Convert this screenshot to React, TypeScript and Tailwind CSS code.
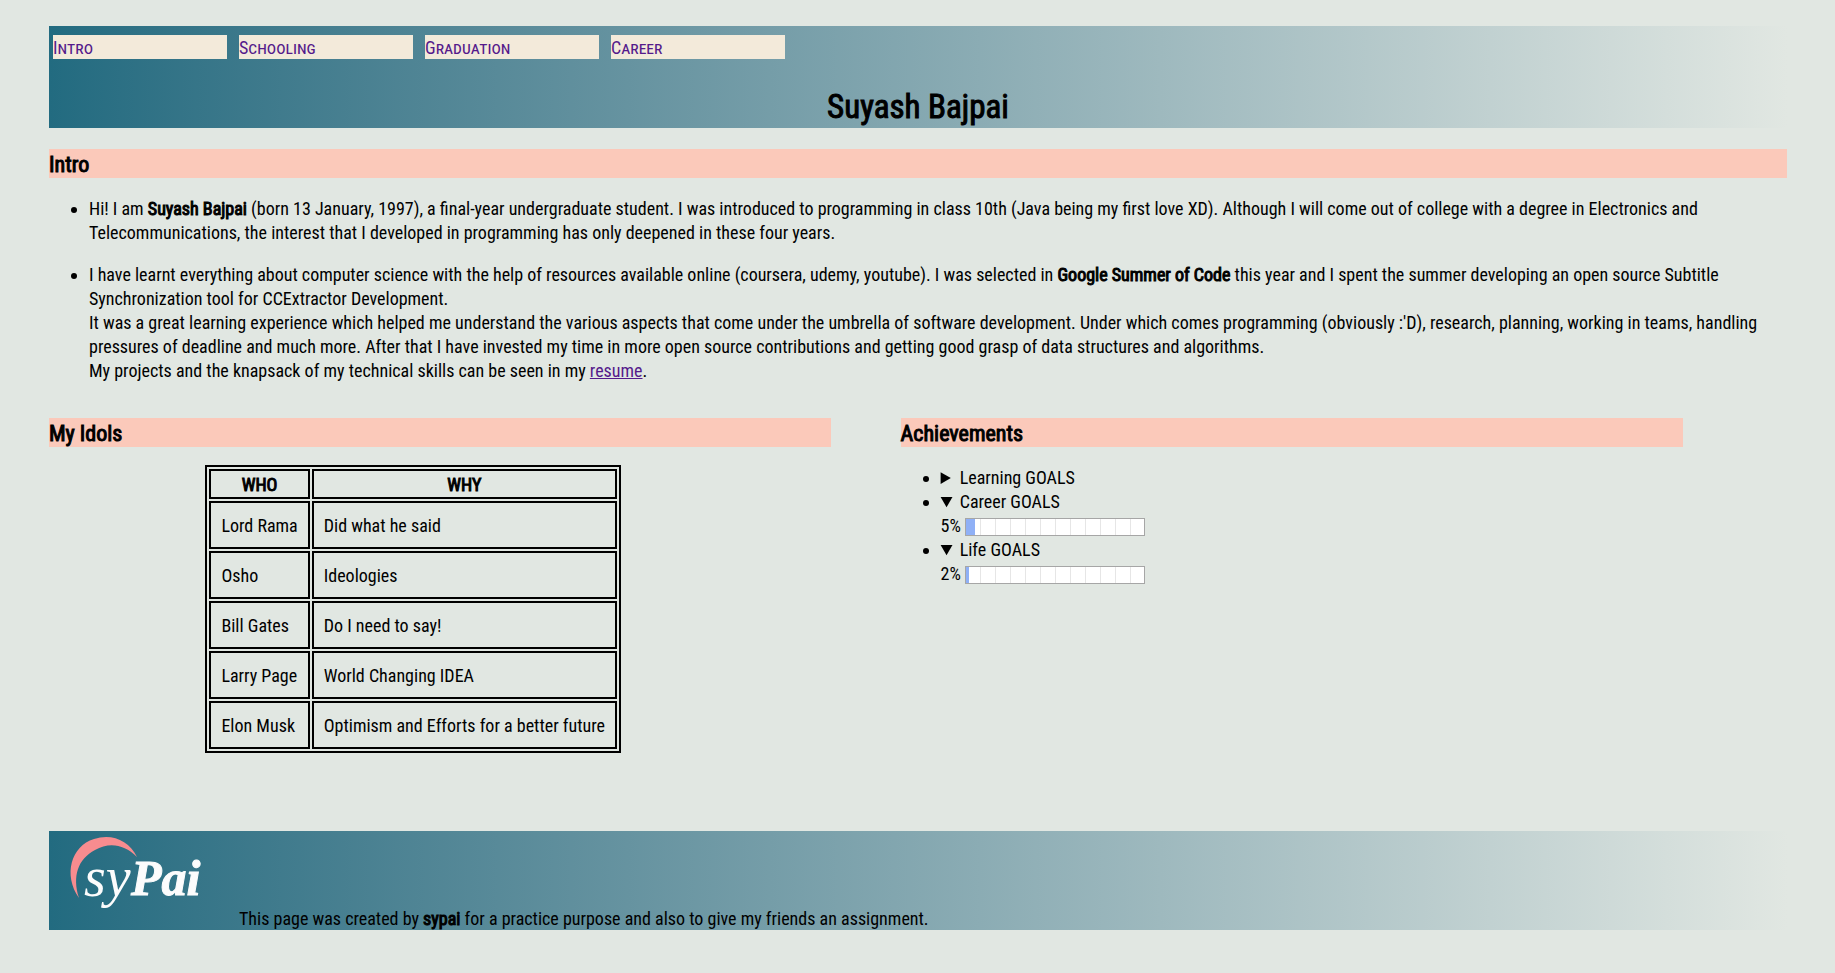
import type { ReactNode } from "react";

const NAV_LINKS = [
  { label: "Intro", href: "#intro" },
  { label: "Schooling", href: "#schooling" },
  { label: "Graduation", href: "#graduation" },
  { label: "Career", href: "#career" },
];

const IDOLS = [
  { who: "Lord Rama", why: "Did what he said" },
  { who: "Osho", why: "Ideologies" },
  { who: "Bill Gates", why: "Do I need to say!" },
  { who: "Larry Page", why: "World Changing IDEA" },
  { who: "Elon Musk", why: "Optimism and Efforts for a better future" },
];

function SectionHeading({ children }: { children: ReactNode }) {
  return (
    <h2 className="bg-[#fbc9ba] pt-[2px] text-[22px] leading-[27px] font-normal [-webkit-text-stroke:1px_black]">
      {children}
    </h2>
  );
}

function Strong({ children }: { children: ReactNode }) {
  return <b className="font-normal [-webkit-text-stroke:1px_black]">{children}</b>;
}

function Goal({ title, percent }: { title: string; percent?: number }) {
  return (
    <li>
      <details open={percent !== undefined}>
        <summary>{title}</summary>
        {percent !== undefined && (
          <label className="flex h-6 items-center gap-1">
            {percent}%
            <progress
              max={100}
              value={percent}
              className="mt-[2px] h-[18px] w-[180px] appearance-none border border-[#a6a6a6] bg-white [&::-webkit-progress-bar]:bg-[repeating-linear-gradient(to_right,white_0_14px,#e6e6e6_14px_15px)] [&::-webkit-progress-value]:bg-[#8fb0f6]"
            />
          </label>
        )}
      </details>
    </li>
  );
}

function Logo() {
  return (
    <svg viewBox="0 0 186 99" className="h-[99px] w-[186px] shrink-0" role="img" aria-label="syPai">
      <path
        d="M30 67 C14 44 22 15 45 8 C62 2 80 9 88 26 C75 13 60 11 46 19 C29 28 23 45 30 67 Z"
        fill="#f78c8f"
      />
      <g fill="#fcfcfc" fontFamily="'Liberation Serif', serif" fontStyle="italic">
        <text x="35" y="65" fontSize="56">sy</text>
        <text x="82" y="64" fontSize="50" fontWeight="700" stroke="#fcfcfc" strokeWidth="1">
          Pai
        </text>
      </g>
    </svg>
  );
}

export default function App() {
  return (
    <div className="min-h-screen bg-[#e1e7e2] pt-[26px] pr-12 pb-[43px] pl-[49px] font-['Roboto_Condensed','Liberation_Sans_Narrow',Roboto,sans-serif] text-[18px] leading-6 text-black">
      <header className="bg-linear-to-r from-[#226b80] to-[#e1e7e2] pt-[9px]">
        <nav className="flex gap-3 pl-1">
          {NAV_LINKS.map((link) => (
            <a
              key={link.label}
              href={link.href}
              className="w-[174px] bg-[#f3eada] pt-[2px] leading-[22px] text-[#551a8b] [font-variant:small-caps]"
            >
              {link.label}
            </a>
          ))}
        </nav>
        <h1 className="mt-[27px] text-center text-[33px] leading-[42px] font-normal [-webkit-text-stroke:1px_black]">
          Suyash Bajpai
        </h1>
      </header>

      <main>
        <section id="intro" className="mt-[21px]">
          <SectionHeading>Intro</SectionHeading>
          <ul className="mt-[19px] flex list-disc flex-col gap-[18px] pl-10">
            <li>
              Hi! I am <Strong>Suyash Bajpai</Strong> (born 13 January, 1997), a final-year
              undergraduate student. I was introduced to programming in class 10th (Java being my
              first love XD). Although I will come out of college with a degree in Electronics and
              Telecommunications, the interest that I developed in programming has only deepened in
              these four years.
            </li>
            <li>
              I have learnt everything about computer science with the help of resources available
              online (coursera, udemy, youtube). I was selected in{" "}
              <Strong>Google Summer of Code</Strong> this year and I spent the summer developing an
              open source Subtitle Synchronization tool for CCExtractor Development.
              <br />
              It was a great learning experience which helped me understand the various aspects that
              come under the umbrella of software development. Under which comes programming
              (obviously :'D), research, planning, working in teams, handling pressures of deadline
              and much more. After that I have invested my time in more open source contributions
              and getting good grasp of data structures and algorithms.
              <br />
              My projects and the knapsack of my technical skills can be seen in my{" "}
              <a href="#resume" className="text-[#551a8b] underline">
                resume
              </a>
              .
            </li>
          </ul>
        </section>

        <div className="mt-[35px] flex gap-[4%]">
          <section className="w-[45%]">
            <SectionHeading>My Idols</SectionHeading>
            <table className="mt-[18px] ml-[20%] border-separate border-spacing-[2px] border-2 border-black">
              <thead>
                <tr className="[-webkit-text-stroke:1px_black]">
                  <th className="border-2 border-black px-px pt-[2px] text-center font-normal">
                    WHO
                  </th>
                  <th className="border-2 border-black px-px pt-[2px] text-center font-normal">
                    WHY
                  </th>
                </tr>
              </thead>
              <tbody>
                {IDOLS.map((idol) => (
                  <tr key={idol.who}>
                    <td className="border-2 border-black px-[10px] pt-[11px] pb-[9px]">
                      {idol.who}
                    </td>
                    <td className="border-2 border-black px-[10px] pt-[11px] pb-[9px]">
                      {idol.why}
                    </td>
                  </tr>
                ))}
              </tbody>
            </table>
          </section>

          <section className="w-[45%]">
            <SectionHeading>Achievements</SectionHeading>
            <ul className="mt-[19px] list-disc pl-10">
              <Goal title="Learning GOALS" />
              <Goal title="Career GOALS" percent={5} />
              <Goal title="Life GOALS" percent={2} />
            </ul>
          </section>
        </div>
      </main>

      <footer className="mt-[78px] flex items-end bg-linear-to-r from-[#226b80] to-[#e1e7e2]">
        <Logo />
        <p className="pl-1 leading-[22px]">
          This page was created by <Strong>sypai</Strong> for a practice purpose and also to give my
          friends an assignment.
        </p>
      </footer>
    </div>
  );
}
